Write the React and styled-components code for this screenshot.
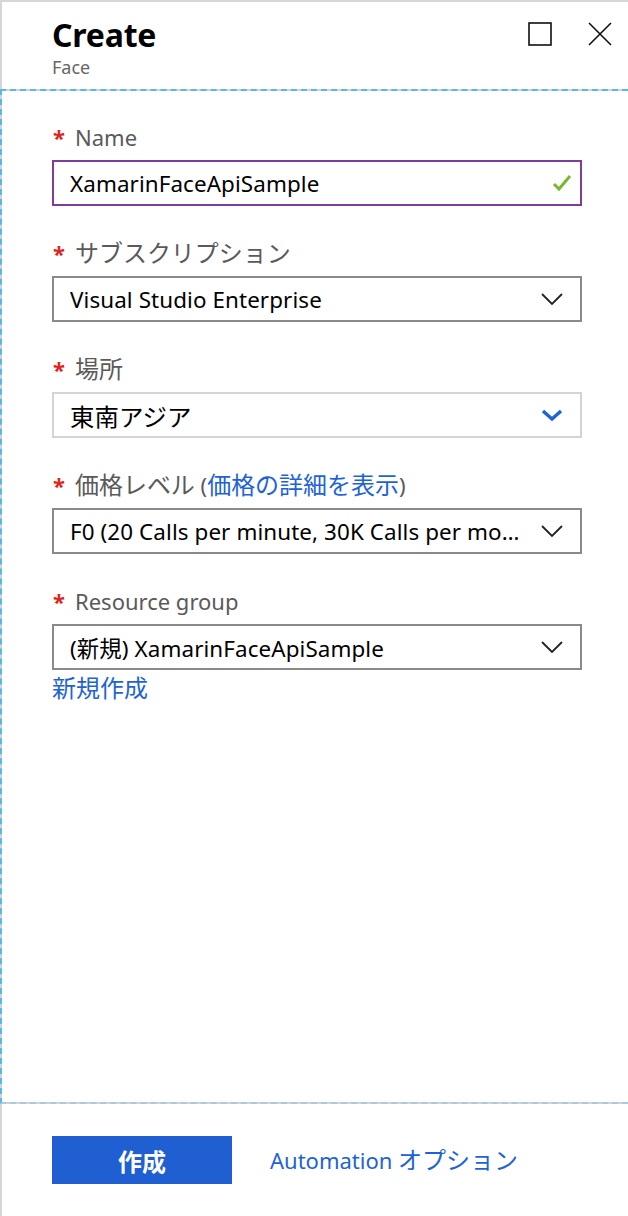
import React from 'react';
import styled, { createGlobalStyle } from 'styled-components';

const GlobalStyle = createGlobalStyle`
  html, body {
    margin: 0;
    padding: 0;
    background: #fff;
  }
  body {
    font-family: "Noto Sans", "Noto Sans CJK JP", sans-serif;
  }
`;

const Panel = styled.div`
  width: 628px;
  height: 1216px;
  display: flex;
  flex-direction: column;
  box-sizing: border-box;
  overflow: hidden;
`;

const Header = styled.header`
  height: 89px;
  box-sizing: border-box;
  border-top: 2px solid #d6d6d6;
  border-left: 2px solid #d6d6d6;
  padding: 12px 16px 0 50px;
  display: flex;
  justify-content: space-between;
  align-items: flex-start;
`;

const TitleBlock = styled.div`
  display: flex;
  flex-direction: column;
`;

const Title = styled.h1`
  margin: 0;
  font-size: 32px;
  font-weight: 700;
  line-height: 42px;
  color: #000;
  letter-spacing: -0.2px;
`;

const Subtitle = styled.div`
  font-size: 18px;
  line-height: 22px;
  color: #666;
`;

const Controls = styled.div`
  display: flex;
  gap: 36px;
  padding-top: 8px;
`;

const IconButton = styled.button`
  border: none;
  background: none;
  padding: 0;
  width: 24px;
  height: 24px;
  display: flex;
  align-items: center;
  justify-content: center;
  cursor: pointer;
`;

const Body = styled.main`
  flex: 1;
  box-sizing: border-box;
  border: 2px dashed #55b9ea;
  border-right: none;
  border-bottom-color: #a8cbe0;
  background: linear-gradient(#fff, #fff) padding-box, #d3d3d3 border-box;
  padding: 28px 46px 0 50px;
  display: flex;
  flex-direction: column;
`;

const Field = styled.div`
  display: flex;
  flex-direction: column;
  margin-bottom: ${p => (p.$last ? 0 : 29)}px;
`;

const Label = styled.label`
  display: flex;
  align-items: baseline;
  height: 36px;
  font-size: 22px;
  line-height: 36px;
  color: #5a5a5a;
  margin-bottom: 5px;
  white-space: nowrap;
`;

const Required = styled.span`
  color: #e0231b;
  font-size: 22px;
  width: 22px;
  padding-left: 1px;
  font-weight: 700;
`;

const Ja = styled.span`
  font-size: ${p => p.$size || 1.09}em;
`;

const Link = styled.a`
  color: #1e63d6;
  text-decoration: none;
  cursor: pointer;
`;

const Box = styled.div`
  height: 46px;
  box-sizing: border-box;
  border: 2px solid ${p => p.$border};
  display: flex;
  align-items: center;
  padding: 0 ${p => (p.$check ? 8 : 16)}px 0 16px;
  gap: 8px;
  font-size: 22.4px;
  color: #000;
`;

const BoxText = styled.span`
  flex: 1;
  min-width: 0;
  white-space: nowrap;
  overflow: hidden;
  text-overflow: ellipsis;
  letter-spacing: 0.1px;
`;

const NewLink = styled(Link)`
  font-size: 22px;
  line-height: 30px;
  margin-top: 3px;
  align-self: flex-start;
`;

const Footer = styled.footer`
  height: 112px;
  box-sizing: border-box;
  border-left: 2px solid #d6d6d6;
  padding: 32px 0 0 50px;
  display: flex;
  align-items: flex-start;
  gap: 38px;
`;

const PrimaryButton = styled.button`
  width: 180px;
  height: 48px;
  border: none;
  background: #1f5fd1;
  color: #fff;
  font-family: inherit;
  font-size: 24px;
  font-weight: 700;
  cursor: pointer;
`;

const FooterLink = styled(Link)`
  font-size: 22px;
  line-height: 48px;
`;

const Chevron = ({ color = '#222', bold }) => (
  <svg width="24" height="14" viewBox="0 0 24 14">
    <polyline
      points={bold ? '3,3 12,11 21,3' : '2,2 12,12 22,2'}
      fill="none"
      stroke={color}
      strokeWidth={bold ? 3.4 : 1.8}
    />
  </svg>
);

const Check = () => (
  <svg width="20" height="18" viewBox="0 0 20 18">
    <polyline points="2,10 7,15 18,2" fill="none" stroke="#7cb82f" strokeWidth="3" />
  </svg>
);

const fields = [
  { label: 'サブスクリプション', value: 'Visual Studio Enterprise', border: '#8a8a8a' },
  { label: '場所', value: <Ja>東南アジア</Ja>, border: '#d4d4d4', blue: true },
];

export default function App() {
  return (
    <>
      <GlobalStyle />
      <Panel>
        <Header>
          <TitleBlock>
            <Title>Create</Title>
            <Subtitle>Face</Subtitle>
          </TitleBlock>
          <Controls>
            <IconButton aria-label="maximize">
              <svg width="24" height="24" viewBox="0 0 24 24">
                <rect x="1" y="1" width="22" height="22" fill="none" stroke="#111" strokeWidth="1.6" />
              </svg>
            </IconButton>
            <IconButton aria-label="close">
              <svg width="24" height="24" viewBox="0 0 24 24">
                <path d="M1 1 L23 23 M23 1 L1 23" stroke="#111" strokeWidth="1.6" />
              </svg>
            </IconButton>
          </Controls>
        </Header>
        <Body>
          <Field>
            <Label><Required>*</Required>Name</Label>
            <Box $border="#7d3c9e" $check>
              <BoxText>XamarinFaceApiSample</BoxText>
              <Check />
            </Box>
          </Field>
          {fields.map(f => (
            <Field key={f.label}>
              <Label><Required>*</Required><Ja>{f.label}</Ja></Label>
              <Box $border={f.border}>
                <BoxText>{f.value}</BoxText>
                {f.blue ? <Chevron color="#1e63d6" bold /> : <Chevron />}
              </Box>
            </Field>
          ))}
          <Field>
            <Label>
              <Required>*</Required><Ja>価格レベル</Ja>&nbsp;(<Link><Ja>価格の詳細を表示</Ja></Link>)
            </Label>
            <Box $border="#8a8a8a">
              <BoxText>F0 (20 Calls per minute, 30K Calls per month)</BoxText>
              <Chevron />
            </Box>
          </Field>
          <Field $last>
            <Label><Required>*</Required>Resource group</Label>
            <Box $border="#8a8a8a">
              <BoxText>(<Ja $size={1}>新規</Ja>) XamarinFaceApiSample</BoxText>
              <Chevron />
            </Box>
          </Field>
          <NewLink><Ja>新規作成</Ja></NewLink>
        </Body>
        <Footer>
          <PrimaryButton>作成</PrimaryButton>
          <FooterLink>Automation <Ja>オプション</Ja></FooterLink>
        </Footer>
      </Panel>
    </>
  );
}
